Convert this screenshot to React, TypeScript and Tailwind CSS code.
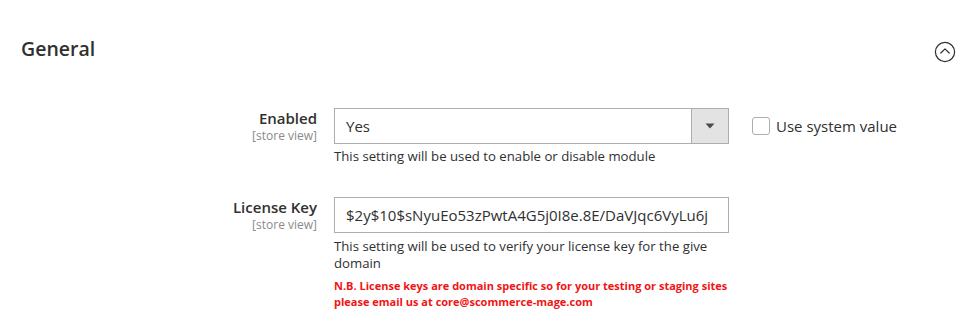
import React from 'react';

const StoreViewLabel = ({ title }: { title: string }) => (
  <div className="w-[317px] shrink-0 text-right">
    <div className="text-[15px] leading-[20px] font-semibold text-[#303030]">{title}</div>
    <div className="text-[12px] leading-[16px] text-[#8a8a8a]">[store view]</div>
  </div>
);

const App = () => {
  return (
    <div className="min-h-screen bg-white font-['Open_Sans',sans-serif] text-[#303030]">
      {/* Section header */}
      <div className="flex items-start justify-between pl-[21px] pr-[22px] pt-[35px]">
        <h2 className="text-[19.5px] leading-[28px] font-semibold text-[#303030]">General</h2>
        <svg width="22" height="22" viewBox="0 0 22 22" className="mt-[6px]" fill="none" stroke="#303030" strokeWidth="1.2">
          <circle cx="11" cy="11" r="9.6" />
          <path d="M6.8 12 L11 7.8 L15.2 12" strokeLinecap="round" strokeLinejoin="round" />
        </svg>
      </div>

      {/* Fields */}
      <div className="mt-[45px] flex flex-col">
        {/* Enabled */}
        <div className="flex items-start">
          <StoreViewLabel title="Enabled" />
          <div className="ml-[17px] w-[395px] shrink-0">
            <div className="flex h-[36px] border border-[#adadad] bg-white">
              <div className="flex flex-1 items-center pl-[11px] text-[15px]">Yes</div>
              <div className="flex w-[37px] items-center justify-center border-l border-[#adadad] bg-[#e3e3e3]">
                <svg width="10" height="6" viewBox="0 0 10 6">
                  <path d="M0.5 0.5 H9.5 L5 5.5 Z" fill="#514943" />
                </svg>
              </div>
            </div>
            <p className="mt-[3px] text-[13.2px] leading-[18px]">This setting will be used to enable or disable module</p>
          </div>
          <label className="ml-[23px] flex h-[36px] items-center gap-[6px] text-[15px]">
            <span className="h-[18px] w-[18px] rounded-[3px] border border-[#adadad] bg-white" />
            Use system value
          </label>
        </div>

        {/* License Key */}
        <div className="mt-[32px] flex items-start">
          <StoreViewLabel title="License Key" />
          <div className="ml-[17px] w-[395px] shrink-0">
            <div className="flex h-[36px] items-center overflow-hidden whitespace-nowrap border border-[#adadad] bg-white pl-[11px] pr-[10px] text-[15px]">
              $2y$10$sNyuEo53zPwtA4G5j0I8e.8E/DaVJqc6VyLu6j
            </div>
            <p className="mt-[5px] text-[13.2px] leading-[17px]">
              This setting will be used to verify your license key for the give domain
            </p>
            <p className="mt-[6px] text-[11px] leading-[16px] font-bold text-[#f01515]">
              N.B. License keys are domain specific so for your testing or staging sites please email us at core@scommerce-mage.com
            </p>
          </div>
        </div>
      </div>
    </div>
  );
};

export default App;
